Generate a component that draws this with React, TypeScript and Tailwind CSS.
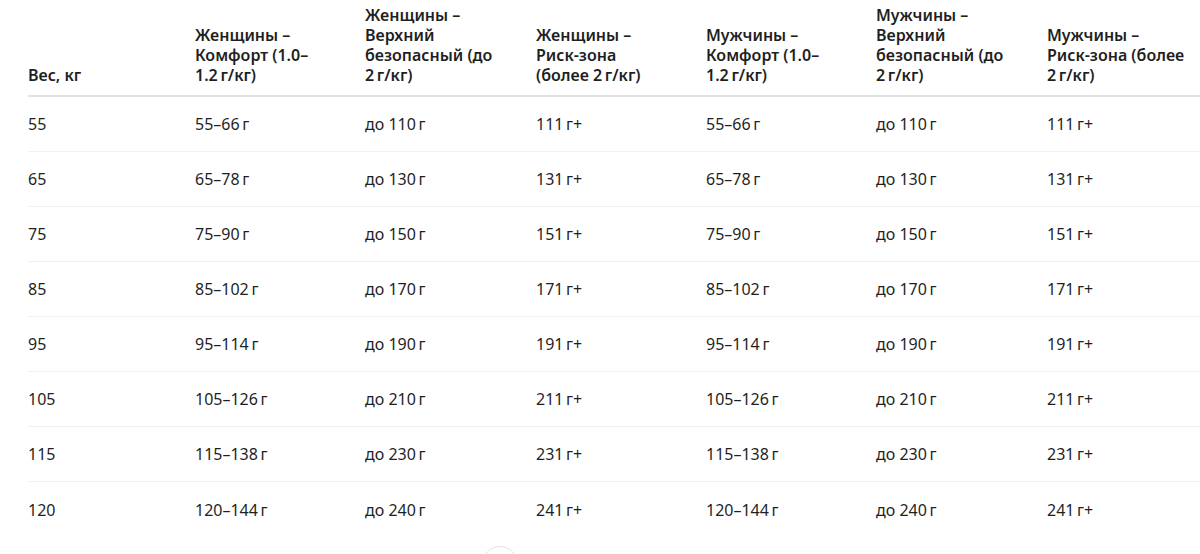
import React from "react";

const NB = "\u202F";

const headers: string[][] = [
  ["Вес, кг"],
  ["Женщины –", "Комфорт (1.0–", `1.2${NB}г/кг)`],
  ["Женщины –", "Верхний", "безопасный (до", `2${NB}г/кг)`],
  ["Женщины –", "Риск-зона", `(более 2${NB}г/кг)`],
  ["Мужчины –", "Комфорт (1.0–", `1.2${NB}г/кг)`],
  ["Мужчины –", "Верхний", "безопасный (до", `2${NB}г/кг)`],
  ["Мужчины –", "Риск-зона (более", `2${NB}г/кг)`],
];

const data: [number, number, number][] = [
  [55, 66, 110],
  [65, 78, 130],
  [75, 90, 150],
  [85, 102, 170],
  [95, 114, 190],
  [105, 126, 210],
  [115, 138, 230],
  [120, 144, 240],
];

const cols = "grid grid-cols-[167px_170px_171px_170px_170px_171px_1fr]";

export default function App() {
  return (
    <div
      className="w-[1200px] h-[554px] overflow-hidden bg-white text-[#1f1f1f] text-[16px]"
      style={{ fontFamily: '"Noto Sans", "Open Sans", sans-serif' }}
    >
      <div className="pl-[28px]">
        <div className={`${cols} h-[97px] items-end border-b-2 border-[#e3e3e3] pb-[10px] font-semibold leading-[20px]`}>
          {headers.map((h, i) => (
            <div key={i}>
              {h.map((l, j) => (
                <div key={j} className="whitespace-nowrap">{l}</div>
              ))}
            </div>
          ))}
        </div>
        {data.map(([w, hi, up], r) => {
          const cells = [
            `${w}`,
            `${w}–${hi}${NB}г`,
            `до ${up}${NB}г`,
            `${up + 1}${NB}г+`,
            `${w}–${hi}${NB}г`,
            `до ${up}${NB}г`,
            `${up + 1}${NB}г+`,
          ];
          return (
            <div
              key={r}
              className={`${cols} h-[55px] items-center ${r < data.length - 1 ? "border-b border-[#f0f0f0]" : ""}`}
            >
              {cells.map((c, i) => (
                <div key={i} className="whitespace-nowrap">{c}</div>
              ))}
            </div>
          );
        })}
      </div>
      <div className="ml-[482px] mt-[9px] w-[36px] h-[36px] rounded-full border border-[#e0e0e0] bg-white" />
    </div>
  );
}
